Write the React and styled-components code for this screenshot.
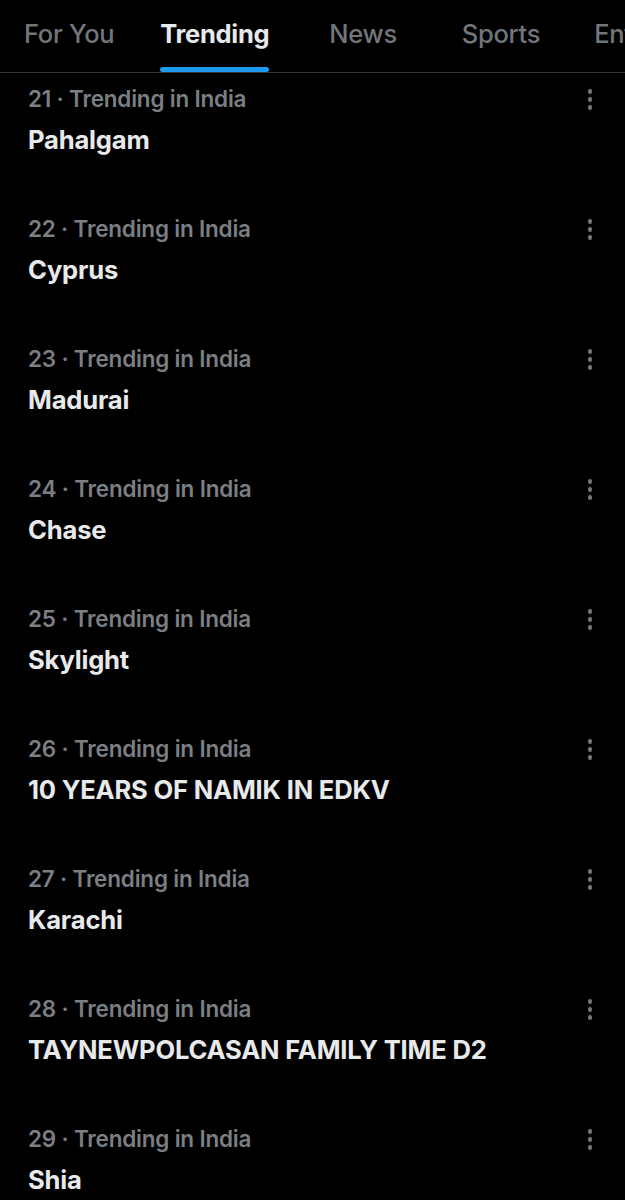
import React from 'react';
import styled, { createGlobalStyle } from 'styled-components';

const GlobalStyle = createGlobalStyle`
  html, body {
    margin: 0;
    padding: 0;
    background: #000;
  }
  body {
    font-family: Inter, "Open Sans", "Liberation Sans", sans-serif;
    color: #e7e9ea;
    overflow: hidden;
  }
`;

const tabs = ['For You', 'Trending', 'News', 'Sports', 'Entertainment'];

const trends = [
  { rank: 21, title: 'Pahalgam' },
  { rank: 22, title: 'Cyprus' },
  { rank: 23, title: 'Madurai' },
  { rank: 24, title: 'Chase' },
  { rank: 25, title: 'Skylight' },
  { rank: 26, title: '10 YEARS OF NAMIK IN EDKV' },
  { rank: 27, title: 'Karachi' },
  { rank: 28, title: 'TAYNEWPOLCASAN FAMILY TIME D2' },
  { rank: 29, title: 'Shia' },
];

const Page = styled.div`
  width: 625px;
  height: 1200px;
  background: #000;
  overflow: hidden;
`;

const TabBar = styled.div`
  display: flex;
  height: 72px;
  border-bottom: 1px solid #2f3336;
  padding-left: 24px;
  white-space: nowrap;
  overflow: hidden;
`;

const Tab = styled.div`
  position: relative;
  display: flex;
  align-items: center;
  flex-shrink: 0;
  height: 100%;
  padding-bottom: 6px;
  box-sizing: border-box;
  margin-right: ${p => p.$gap}px;
  font-size: 25.5px;
  font-weight: ${p => (p.$active ? 700 : 500)};
  color: ${p => (p.$active ? '#e7e9ea' : '#71767b')};
  letter-spacing: -0.3px;
`;

const Underline = styled.span`
  position: absolute;
  left: 0;
  right: 0;
  bottom: 0;
  height: 5px;
  border-radius: 3px;
  background: #1d9bf0;
`;

const Row = styled.div`
  display: flex;
  justify-content: space-between;
  height: 130px;
  padding: 12px 33px 0 28px;
  box-sizing: border-box;
`;

const Texts = styled.div`
  display: flex;
  flex-direction: column;
`;

const Meta = styled.div`
  font-size: 22.5px;
  font-weight: 600;
  color: #7a7f84;
  line-height: 28px;
  letter-spacing: -0.2px;
`;

const Title = styled.div`
  font-size: 25.6px;
  font-weight: 700;
  color: #e7e9ea;
  line-height: 30px;
  margin-top: 12px;
  letter-spacing: -0.2px;
`;

const More = styled.div`
  display: flex;
  flex-direction: column;
  gap: 3.5px;
  padding-top: 4px;
  span {
    width: 4.5px;
    height: 4.5px;
    border-radius: 50%;
    background: #71767b;
  }
`;

const gaps = [46, 60, 65, 54, 0];

export default function App() {
  return (
    <Page>
      <GlobalStyle />
      <TabBar>
        {tabs.map((t, i) => (
          <Tab key={t} $active={t === 'Trending'} $gap={gaps[i]}>
            {t}
            {t === 'Trending' && <Underline />}
          </Tab>
        ))}
      </TabBar>
      {trends.map(t => (
        <Row key={t.rank}>
          <Texts>
            <Meta>{t.rank} · Trending in India</Meta>
            <Title>{t.title}</Title>
          </Texts>
          <More>
            <span />
            <span />
            <span />
          </More>
        </Row>
      ))}
    </Page>
  );
}
